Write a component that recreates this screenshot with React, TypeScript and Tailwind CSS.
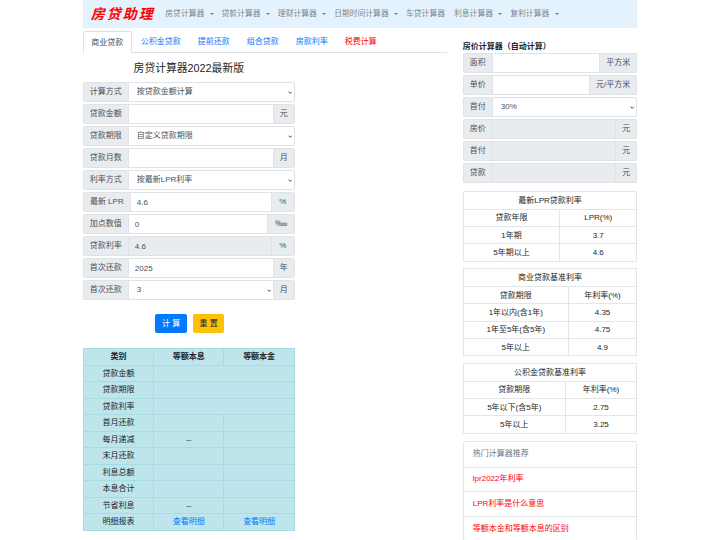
import React from 'react';

const font = { fontFamily: '"Liberation Sans", "Noto Sans CJK SC", sans-serif' };

const navItems = [
  { name: '房贷计算器', caret: true },
  { name: '贷款计算器', caret: true },
  { name: '理财计算器', caret: true },
  { name: '日期时间计算器', caret: true },
  { name: '车贷计算器', caret: false },
  { name: '利息计算器', caret: true },
  { name: '复利计算器', caret: true },
];

function Addon({ children, className = '' }: { children: React.ReactNode; className?: string }) {
  return (
    <div className={`flex h-full shrink-0 items-center justify-center border border-[#dfe3e7] bg-[#e9ecef] text-[8px] text-[#495057] ${className}`}>
      {children}
    </div>
  );
}

type RowProps = {
  label: string;
  labelW?: string;
  value?: string;
  options?: boolean;
  disabled?: boolean;
  suffix?: string;
  suffixW?: string;
};

function Row({ label, labelW = 'w-[45px]', value = '', options, disabled, suffix, suffixW = 'w-[21px]' }: RowProps) {
  return (
    <div className="flex h-5 items-center">
      <Addon className={`${labelW} rounded-l-[2px] border-r-0`}>{label}</Addon>
      {options ? (
        <div className="relative h-full min-w-0 flex-1">
          <select className={`block h-full w-full appearance-none border border-[#dfe3e7] bg-white pl-2 text-[8px] text-[#495057] ${suffix ? '' : 'rounded-r-[2px]'}`}>
            <option>{value}</option>
          </select>
          <svg viewBox="0 0 8 5" className="pointer-events-none absolute right-[2.5px] top-[8.5px] h-[3px] w-[4.5px]" fill="none" stroke="#333" strokeWidth="1.6">
            <path d="M1 1l3 3 3-3" />
          </svg>
        </div>
      ) : (
        <input
          readOnly
          defaultValue={value}
          className={`h-full min-w-0 flex-1 border border-[#dfe3e7] px-[6px] text-[8px] text-[#495057] ${disabled ? 'bg-[#e9ecef]' : 'bg-white'}`}
        />
      )}
      {suffix && <Addon className={`${suffixW} rounded-r-[2px] border-l-0`}>{suffix}</Addon>}
    </div>
  );
}

function RateTable({ title, head, rows, firstW }: { title: string; head: string[]; rows: string[][]; firstW: string }) {
  return (
    <table className="mb-[6.5px] w-full table-fixed border-collapse text-center text-[8px] text-[#212529] [&_td]:pt-px">
      <colgroup>
        <col className={firstW} />
        <col />
      </colgroup>
      <tbody>
        <tr className="h-[17.6px]">
          <td colSpan={2} className="border border-[#e3e6e9]">{title}</td>
        </tr>
        {[head, ...rows].map((r) => (
          <tr key={r[0]} className="h-[17.4px]">
            <td className="border border-[#e3e6e9]">{r[0]}</td>
            <td className="border border-[#e3e6e9]">{r[1]}</td>
          </tr>
        ))}
      </tbody>
    </table>
  );
}

const resultRows = [
  ['贷款金额', null],
  ['贷款期限', null],
  ['贷款利率', null],
  ['首月还款', '', ''],
  ['每月递减', '--', ''],
  ['末月还款', '', ''],
  ['利息总额', '', ''],
  ['本息合计', '', ''],
  ['节省利息', '--', ''],
];

export default function App() {
  return (
    <div className="mx-auto h-[540px] w-[554.4px] overflow-hidden bg-white" style={font}>
      <nav className="flex h-7 items-center bg-[#e3f2fd] pl-2">
        <span className="mr-[6px] text-[14px] font-bold italic tracking-[2px] text-[#f00]" style={{ fontFamily: '"Liberation Serif", "Noto Sans CJK SC", serif' }}>
          房贷助理
        </span>
        {navItems.map((n) => (
          <span key={n.name} className="flex items-center px-[4.5px] text-[7.8px] text-black/50">
            {n.name}
            {n.caret && <i className="ml-[5.3px] mr-[-1px] h-0 w-0 border-x-[2px] border-t-[2px] border-x-transparent border-t-black/50" />}
          </span>
        ))}
      </nav>

      <div className="flex gap-4">
        <div className="w-[364px]">
          <div className="mt-[3px] flex h-[22px] gap-px border-b border-[#dee2e6] text-[8px] text-[#007bff]">
            <span className="flex h-[22px] items-center rounded-t-[2px] border border-b-0 border-[#dee2e6] bg-white px-[7.5px] text-[#495057]">商业贷款</span>
            <span className="flex items-center px-2">公积金贷款</span>
            <span className="flex items-center px-2">提前还款</span>
            <span className="flex items-center px-2">组合贷款</span>
            <span className="flex items-center px-2">房款利率</span>
            <span className="flex items-center px-2 text-[#f00]">税费计算</span>
          </div>

          <div className="w-[212px]">
            <h1 className="mb-[6px] mt-[8px] h-[15px] text-center text-[10.8px] leading-[15px] text-[#212529]">房贷计算器2022最新版</h1>
            <div className="flex flex-col gap-[2px]">
              <Row label="计算方式" options value="按贷款金额计算" />
              <Row label="贷款金额" suffix="元" />
              <Row label="贷款期限" options value="自定义贷款期限" />
              <Row label="贷款月数" suffix="月" />
              <Row label="利率方式" options value="按最新LPR利率" />
              <Row label="最新 LPR" labelW="w-[47px]" value="4.6" suffix="%" suffixW="w-[23px]" />
              <Row label="加点数值" value="0" suffix="‱" suffixW="w-[27px]" />
              <Row label="贷款利率" value="4.6" disabled suffix="%" suffixW="w-[23px]" />
              <Row label="首次还款" value="2025" suffix="年" />
              <Row label="首次还款" options value="3" suffix="月" />
            </div>

            <div className="mt-[14px] flex justify-center gap-[6px] pl-[2px]">
              <button className="h-[19px] w-[31.5px] rounded-[2px] bg-[#007bff] text-[8px] text-white">计 算</button>
              <button className="h-[19px] w-[31.5px] rounded-[2px] bg-[#ffc107] text-[8px] text-[#212529]">重 置</button>
            </div>

            <table className="mt-[15px] w-full table-fixed border-collapse bg-[#bee5eb] text-center text-[8px] text-[#212529] [&_td]:pt-px">
              <tbody>
                <tr className="h-[16.6px] font-bold">
                  <td className="border border-[#a9dbe3]">类别</td>
                  <td className="border border-[#a9dbe3]">等额本息</td>
                  <td className="border border-[#a9dbe3]">等额本金</td>
                </tr>
                {resultRows.map((r) => (
                  <tr key={r[0]} className="h-[16.5px]">
                    <td className="border border-[#a9dbe3]">{r[0]}</td>
                    {r[1] === null ? (
                      <td colSpan={2} className="border border-[#a9dbe3]" />
                    ) : (
                      <>
                        <td className="border border-[#a9dbe3]">{r[1]}</td>
                        <td className="border border-[#a9dbe3]">{r[2]}</td>
                      </>
                    )}
                  </tr>
                ))}
                <tr className="h-[16.5px]">
                  <td className="border border-[#a9dbe3]">明细报表</td>
                  <td className="border border-[#a9dbe3] text-[#007bff]">查看明细</td>
                  <td className="border border-[#a9dbe3] text-[#007bff]">查看明细</td>
                </tr>
              </tbody>
            </table>
          </div>
        </div>

        <div className="min-w-0 flex-1">
          <h2 className="mt-[12px] h-[13px] text-[8px] font-bold leading-[13px] text-[#212529]">房价计算器（自动计算）</h2>
          <div className="flex flex-col gap-[2px]">
            <Row label="面积" labelW="w-[29px]" suffix="平方米" suffixW="w-[37px]" />
            <Row label="单价" labelW="w-[29px]" suffix="元/平方米" suffixW="w-[47px]" />
            <Row label="首付" labelW="w-[29px]" options value="30%" />
            <Row label="房价" labelW="w-[29px]" disabled suffix="元" />
            <Row label="首付" labelW="w-[29px]" disabled suffix="元" />
            <Row label="贷款" labelW="w-[29px]" disabled suffix="元" />
          </div>

          <div className="mt-2">
            <RateTable title="最新LPR贷款利率" firstW="w-[96.5px]" head={['贷款年限', 'LPR(%)']} rows={[['1年期', '3.7'], ['5年期以上', '4.6']]} />
            <RateTable title="商业贷款基准利率" firstW="w-[105px]" head={['贷款期限', '年利率(%)']} rows={[['1年以内(含1年)', '4.35'], ['1年至5年(含5年)', '4.75'], ['5年以上', '4.9']]} />
            <RateTable title="公积金贷款基准利率" firstW="w-[102px]" head={['贷款期限', '年利率(%)']} rows={[['5年以下(含5年)', '2.75'], ['5年以上', '3.25']]} />
          </div>

          <ul className="mt-[7.5px] rounded-[2px] border border-[#e3e6e9] text-[8px]">
            <li className="flex h-[24.5px] items-center px-[9px] text-[#6c757d]">热门计算器推荐</li>
            <li className="flex h-[24.6px] items-center border-t border-[#e3e6e9] px-[9px] text-[#f00]">lpr2022年利率</li>
            <li className="flex h-[24.6px] items-center border-t border-[#e3e6e9] px-[9px] text-[#f00]">LPR利率是什么意思</li>
            <li className="flex h-[24.6px] items-center border-t border-[#e3e6e9] px-[9px] text-[#f00]">等额本金和等额本息的区别</li>
          </ul>
        </div>
      </div>
    </div>
  );
}
